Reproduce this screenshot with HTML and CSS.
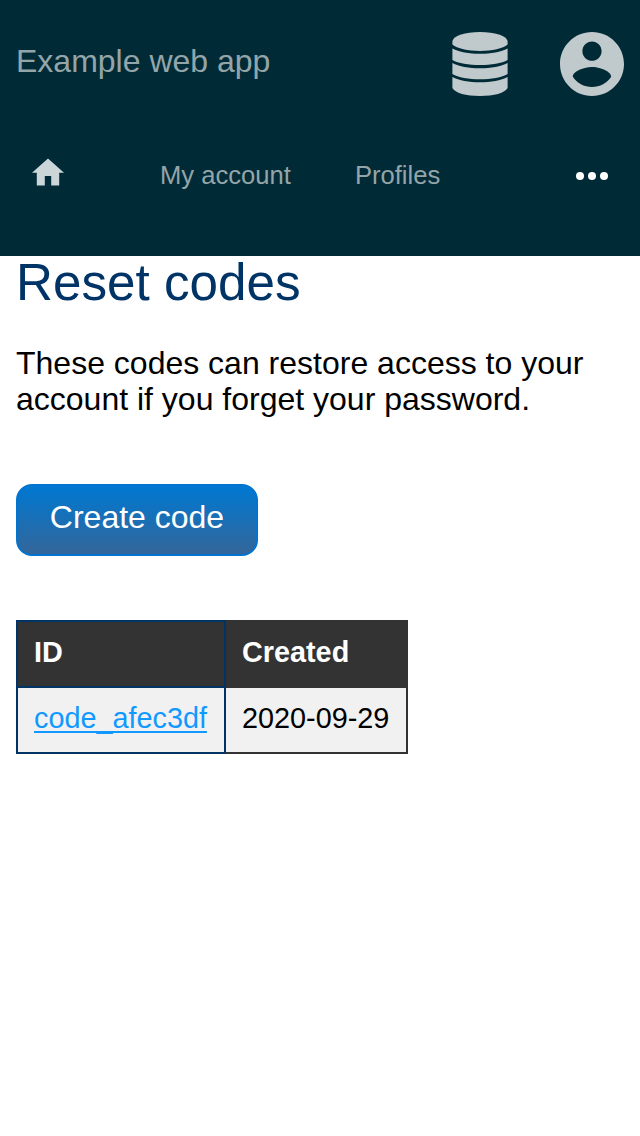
FILE: index.html
```html
<!DOCTYPE html>
<html lang="en">
<head>
<meta charset="utf-8">
<title>Reset codes</title>
<link rel="stylesheet" href="styles.css">
</head>
<body>
<header class="header">
  <div class="topbar">
    <span class="brand">Example web app</span>
    <svg class="icon-db" viewBox="0 0 56 64"><path d="M.4 9C2 3.500 13 0 28 0s26 3.500 27.600 9v3.500C51 16.500 40 18.900 28 18.900S5 16.500.4 12.500z"/><path d="M.4 16.500C7 20 17 21.800 28 21.800s21-1.800 27.600-5.300V28C50 31.200 39 33 28 33S6 31.200.4 28z"/><path d="M.4 31C7 34.500 17 36.300 28 36.300s21-1.800 27.600-5.300V42C50 45.500 39 47.300 28 47.300S6 45.500.4 42z"/><path d="M.4 45C7 48.500 17 50.300 28 50.300s21-1.800 27.600-5.300V56C53 61 42 64 28 64S3 61 .4 56z"/></svg>
    <svg class="icon-user" viewBox="2 2 20 20"><path d="M12 2C6.480 2 2 6.480 2 12s4.480 10 10 10 10-4.480 10-10S17.520 2 12 2zm0 3c1.660 0 3 1.340 3 3s-1.340 3-3 3-3-1.340-3-3 1.340-3 3-3zm0 14.200c-2.500 0-4.710-1.280-6-3.220.03-1.990 4-3.080 6-3.080s5.970 1.090 6 3.080c-1.290 1.940-3.500 3.220-6 3.220z"/></svg>
  </div>
  <nav class="nav">
    <svg class="icon-home" viewBox="2 3 20 17"><path d="M10 20v-6h4v6h5v-8h3L12 3 2 12h3v8z"/></svg>
    <a class="nav-link">My account</a>
    <a class="nav-link">Profiles</a>
    <svg class="icon-more" viewBox="0 0 32 8"><circle cx="4" cy="4" r="4"/><circle cx="16" cy="4" r="4"/><circle cx="28" cy="4" r="4"/></svg>
  </nav>
</header>
<main class="content">
  <h1 class="title">Reset codes</h1>
  <p class="intro">These codes can restore access to your account if you forget your password.</p>
  <button class="button">Create code</button>
  <table class="codes">
    <thead><tr><th class="id-cell">ID</th><th>Created</th></tr></thead>
    <tbody><tr><td class="id-cell"><a class="code-link" href="#">code_afec3df</a></td><td>2020-09-29</td></tr></tbody>
  </table>
</main>
</body>
</html>
```
FILE: styles.css
```css
* { box-sizing: border-box; }
body {
  margin: 0;
  background: #fff;
  color: #000;
  font: 32px/36px "Liberation Sans", Arial, sans-serif;
}
.header {
  height: 256px;
  background: #002b36;
  color: #94a5a9;
}
.topbar {
  display: flex;
  align-items: flex-start;
  height: 144px;
  padding: 32px 16px 0;
}
.brand { margin: 11px auto 0 0; }
.icon-db {
  width: 56px;
  height: 64px;
  margin-right: 52px;
  fill: #c0cacd;
}
.icon-user {
  width: 64px;
  height: 64px;
  fill: #c0cacd;
}
.nav {
  display: flex;
  align-items: center;
  height: 64px;
  padding: 0 32px;
  font-size: 25.6px;
}
.icon-home {
  width: 32px;
  height: 28px;
  margin: -8px 96px 0 0;
  fill: #ccd5d7;
}
.nav-link {
  margin-right: 64px;
  padding-bottom: 2px;
}
.icon-more {
  width: 32px;
  height: 8px;
  margin-left: auto;
  fill: #fff;
}
.content { padding: 0 16px; }
.title {
  margin: 0;
  padding-top: 4px;
  color: #036;
  font-size: 51.2px;
  font-weight: 400;
  line-height: 46px;
}
.intro { margin: 39px 0 67px; }
.button {
  display: block;
  width: 242px;
  height: 72px;
  padding: 0 0 6px;
  border: 2px solid #0074d0;
  border-radius: 16px;
  background: linear-gradient(#0078d2, #369);
  color: #fff;
  font: inherit;
}
.codes {
  width: 392px;
  margin-top: 64px;
  border-collapse: collapse;
  font-size: 28.8px;
  line-height: 32px;
}
.codes th,
.codes td {
  height: 66px;
  padding: 0 16px 4px;
  border: 2px solid #333;
  text-align: left;
}
.codes th {
  background: #333;
  color: #fff;
}
.codes td { background: #f1f1f1; }
.codes .id-cell {
  width: 208px;
  border-color: #036;
}
.code-link {
  color: #19f;
  text-decoration-thickness: 2px;
  text-underline-offset: 3px;
  text-decoration-skip-ink: none;
}
```
